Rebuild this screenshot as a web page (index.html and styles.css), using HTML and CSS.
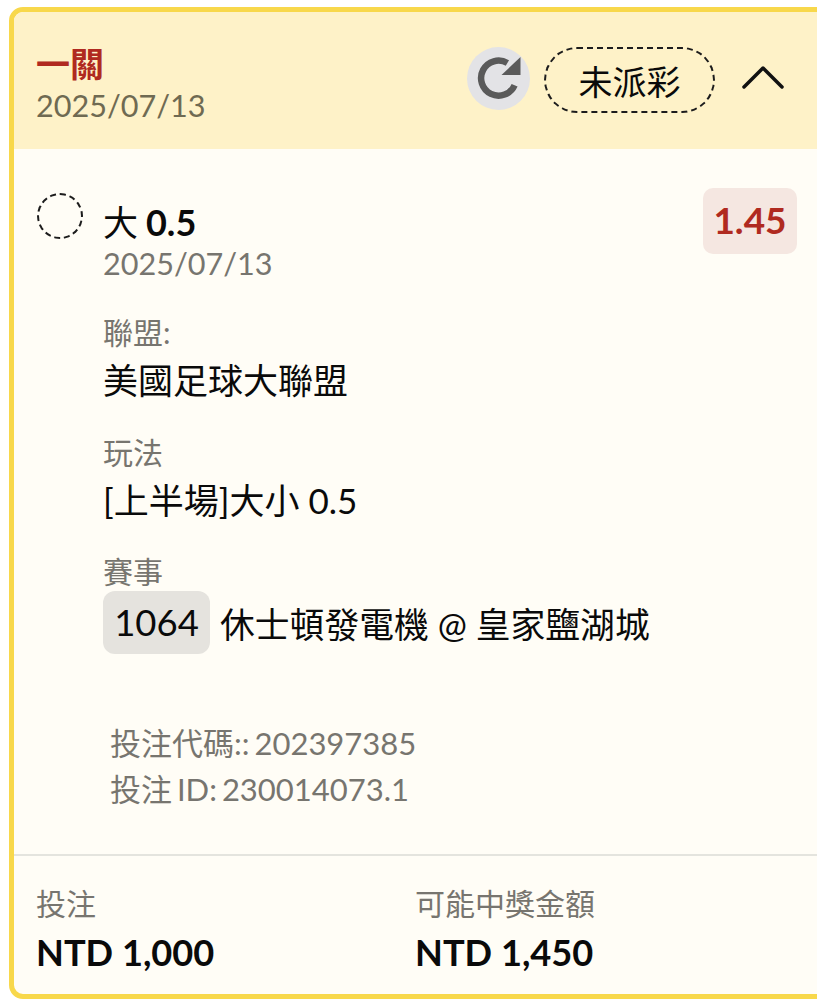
FILE: index.html
```html
<!DOCTYPE html>
<html lang="zh-Hant">
<head>
    <meta charset="UTF-8">
    <title>投注紀錄</title>
    <link rel="stylesheet" href="styles.css">
</head>
<body>
    <div class="card">
        <div class="card-header">
            <div class="title-block">
                <div class="bet-type">一關</div>
                <div class="bet-date">2025/07/13</div>
            </div>
            <div class="header-actions">
                <div class="refresh">
                    <svg width="46" height="46" viewBox="0 0 46 46">
                        <path class="refresh-arc" d="M38.6 30.2A17.5 17.5 0 1 1 31.4 8"/>
                        <path class="refresh-head" d="M44.5 2V20H25.5Z"/>
                    </svg>
                </div>
                <div class="status">未派彩</div>
                <svg class="chevron" width="42" height="24" viewBox="0 0 42 24">
                    <path d="M2 22L21 3L40 22"/>
                </svg>
            </div>
        </div>

        <div class="card-body">
            <div class="selection">
                <div class="status-dot"></div>
                <div class="selection-main">
                    <div class="selection-name">大 <b>0.5</b></div>
                    <div class="selection-date">2025/07/13</div>
                </div>
                <div class="odds">1.45</div>
            </div>

            <div class="details">
                <div class="detail">
                    <div class="detail-label">聯盟:</div>
                    <div class="detail-value">美國足球大聯盟</div>
                </div>
                <div class="detail">
                    <div class="detail-label">玩法</div>
                    <div class="detail-value">[上半場]大小 0.5</div>
                </div>
                <div class="detail">
                    <div class="detail-label">賽事</div>
                    <div class="detail-value match">
                        <span class="match-no">1064</span>
                        <span class="match-name">休士頓發電機 @ 皇家鹽湖城</span>
                    </div>
                </div>
            </div>

            <div class="codes">
                <div>投注代碼:: 202397385</div>
                <div>投注 ID: 230014073.1</div>
            </div>
        </div>

        <div class="card-footer">
            <div class="amount">
                <div class="amount-label">投注</div>
                <div class="amount-value">NTD 1,000</div>
            </div>
            <div class="amount">
                <div class="amount-label">可能中獎金額</div>
                <div class="amount-value">NTD 1,450</div>
            </div>
        </div>
    </div>
</body>
</html>
```

FILE: styles.css
```css
html, body {
    margin: 0;
    padding: 0;
    background: #ffffff;
}

body {
    width: 817px;
    height: 1000px;
    overflow: hidden;
    font-family: Lato, "Noto Sans CJK TC", sans-serif;
    color: #0a0a0a;
}

/* the card runs past the right edge of the window */
.card {
    box-sizing: border-box;
    width: 840px;
    height: 992px;
    margin: 7px 0 0 9px;
    border: 5px solid #f8d84b;
    border-radius: 14px;
    background: #fffdf6;
    overflow: hidden;
    display: flex;
    flex-direction: column;
}

.card-header {
    height: 137px;
    flex-shrink: 0;
    box-sizing: border-box;
    padding: 0 60px 0 22px;
    background: #fef2c8;
    display: flex;
    align-items: center;
    justify-content: space-between;
}

.title-block {
    margin-top: 5px;
}

.bet-type {
    font-size: 34px;
    line-height: 46px;
    font-weight: 700;
    color: #b02a20;
}

.bet-date {
    font-size: 30.6px;
    line-height: 38px;
    color: #6f6a52;
}

.header-actions {
    display: flex;
    align-items: center;
    margin-top: -1px;
}

.refresh {
    width: 63px;
    height: 63px;
    margin-top: -4px;
    border-radius: 50%;
    background: #e3e3e6;
    display: flex;
    align-items: center;
    justify-content: center;
}

.refresh-arc {
    fill: none;
    stroke: #5a5a5a;
    stroke-width: 6.5;
}

.refresh-head {
    fill: #5a5a5a;
}

.status {
    box-sizing: border-box;
    width: 171px;
    height: 66px;
    margin-left: 14px;
    border: 2px dashed #1c1c1c;
    border-radius: 33px;
    font-size: 34px;
    display: flex;
    align-items: center;
    justify-content: center;
}

.chevron {
    margin-left: 27px;
    margin-top: -6px;
}

.chevron path {
    fill: none;
    stroke: #111111;
    stroke-width: 3.5;
    stroke-linecap: round;
    stroke-linejoin: round;
}

.card-body {
    flex: 1;
    padding: 39px 47px 0 22px;
}

.selection {
    display: flex;
    align-items: flex-start;
}

.status-dot {
    box-sizing: border-box;
    width: 46px;
    height: 46px;
    margin: 5px 0 0 1px;
    border: 2px dashed #1c1c1c;
    border-radius: 50%;
    flex-shrink: 0;
}

.selection-main {
    flex: 1;
    margin-left: 20px;
    padding-top: 12px;
}

.selection-name {
    font-size: 35px;
    line-height: 44px;
    word-spacing: -1px;
}

.selection-name b {
    font-size: 36px;
}

.selection-date {
    font-size: 30.6px;
    line-height: 40px;
    color: #77756f;
}

.odds {
    box-sizing: border-box;
    width: 94px;
    height: 66px;
    padding-bottom: 3px;
    border-radius: 10px;
    background: #f5e7e1;
    color: #b02a20;
    font-size: 37px;
    font-weight: 700;
    display: flex;
    align-items: center;
    justify-content: center;
}

.details {
    margin-left: 67px;
    margin-top: 27px;
}

.detail {
    margin-bottom: 22.5px;
}

.detail-label {
    font-size: 30px;
    line-height: 42px;
    color: #77756f;
}

.detail-value {
    font-size: 35px;
    line-height: 55px;
}

.match {
    display: flex;
    align-items: center;
    gap: 10px;
    margin-top: -1px;
}

.match-no {
    box-sizing: border-box;
    width: 107px;
    height: 63px;
    border-radius: 12px;
    background: #e5e3de;
    display: flex;
    align-items: center;
    justify-content: center;
    font-size: 36.5px;
}

.match-name {
    font-size: 34.8px;
    position: relative;
    top: 2px;
}

.codes {
    margin-left: 74px;
    margin-top: 66px;
    font-size: 31px;
    line-height: 46px;
    word-spacing: -3px;
    color: #77756f;
}

.card-footer {
    height: 140px;
    flex-shrink: 0;
    box-sizing: border-box;
    border-top: 2px solid #e4e4de;
    padding: 25px 0 0 22px;
    display: flex;
}

.amount {
    width: 379px;
}

.amount-label {
    font-size: 30px;
    line-height: 44px;
    color: #77756f;
}

.amount-value {
    font-size: 36.2px;
    line-height: 54px;
    font-weight: 700;
}
```
